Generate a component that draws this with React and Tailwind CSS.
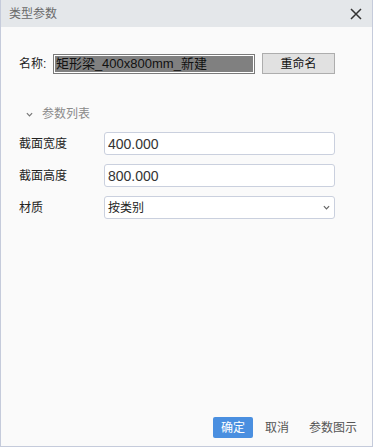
import React, { useState } from 'react';

const cjk = { fontFamily: '"Liberation Sans", "Noto Sans CJK SC", sans-serif' };

function Chevron({ className }) {
  return (
    <svg className={className} viewBox="0 0 8 5" fill="none" stroke="currentColor" strokeWidth={1.4}>
      <path d="M1 1l3 3 3-3" />
    </svg>
  );
}

export default function App() {
  const [width, setWidth] = useState('400.000');
  const [height, setHeight] = useState('800.000');

  return (
    <div className="h-screen w-full flex flex-col bg-[#fafafa] border border-t-0 border-[#c5cbdb]" style={cjk}>
      {/* Title bar */}
      <div className="h-[27px] flex items-center justify-between bg-[#e4e7ea] pl-[8px] pr-[10px] shrink-0">
        <span className="text-[12px] text-[#6a6a6a]">类型参数</span>
        <svg className="w-[12px] h-[12px] text-[#333]" viewBox="0 0 12 12" stroke="currentColor" strokeWidth={1.5}>
          <path d="M1 1l10 10M11 1L1 11" />
        </svg>
      </div>

      {/* Body */}
      <div className="flex-1 flex flex-col pl-[18px] pr-[37px]">
        {/* Name row */}
        <div className="mt-[26px] flex items-center h-[21px]">
          <span className="w-[34px] text-[12px] text-[#222]">名称:</span>
          <div className="w-[203px] h-[20px] border border-[#7a7a7a] bg-white p-[1px]">
            <div className="w-full h-full bg-[#808080] text-[13px] leading-[16px] text-[#111] pl-[1px] whitespace-nowrap overflow-hidden">
              矩形梁_400x800mm_新建
            </div>
          </div>
          <button className="ml-[7px] w-[73px] h-[21px] bg-[#e1e1e1] border border-[#adadad] text-[12px] text-[#111]">
            重命名
          </button>
        </div>

        {/* Section header */}
        <div className="mt-[32px] h-[16px] flex items-center">
          <Chevron className="ml-[7px] w-[7px] h-[5px] text-[#777]" />
          <span className="ml-[9px] text-[12px] text-[#8a8a8a]">参数列表</span>
        </div>

        {/* Rows */}
        <div className="mt-[10px] flex flex-col gap-[9px]">
          <div className="flex items-center">
            <span className="w-[85px] text-[12px] text-[#222]">截面宽度</span>
            <input
              value={width}
              onChange={(e) => setWidth(e.target.value)}
              className="flex-1 h-[23px] bg-white border border-[#cad0de] rounded-[3px] pl-[3px] text-[14px] text-[#333] outline-none"
            />
          </div>
          <div className="flex items-center">
            <span className="w-[85px] text-[12px] text-[#222]">截面高度</span>
            <input
              value={height}
              onChange={(e) => setHeight(e.target.value)}
              className="flex-1 h-[23px] bg-white border border-[#cad0de] rounded-[3px] pl-[3px] text-[14px] text-[#333] outline-none"
            />
          </div>
          <div className="flex items-center">
            <span className="w-[85px] text-[12px] text-[#222]">材质</span>
            <div className="flex-1 h-[23px] bg-white border border-[#cad0de] rounded-[3px] pl-[3px] pr-[4px] flex items-center justify-between">
              <span className="text-[12px] text-[#222]">按类别</span>
              <Chevron className="w-[7px] h-[5px] text-[#666]" />
            </div>
          </div>
        </div>
      </div>

      {/* Footer */}
      <div className="flex justify-end items-center gap-[4px] pr-[7px] pb-[8px] shrink-0">
        <button className="h-[21px] px-[8px] rounded-[2px] bg-[#4a8fe0] text-white text-[12px]">确定</button>
        <button className="h-[21px] px-[8px] text-[#555] text-[12px]">取消</button>
        <button className="h-[21px] px-[8px] text-[#555] text-[12px]">参数图示</button>
      </div>
    </div>
  );
}
